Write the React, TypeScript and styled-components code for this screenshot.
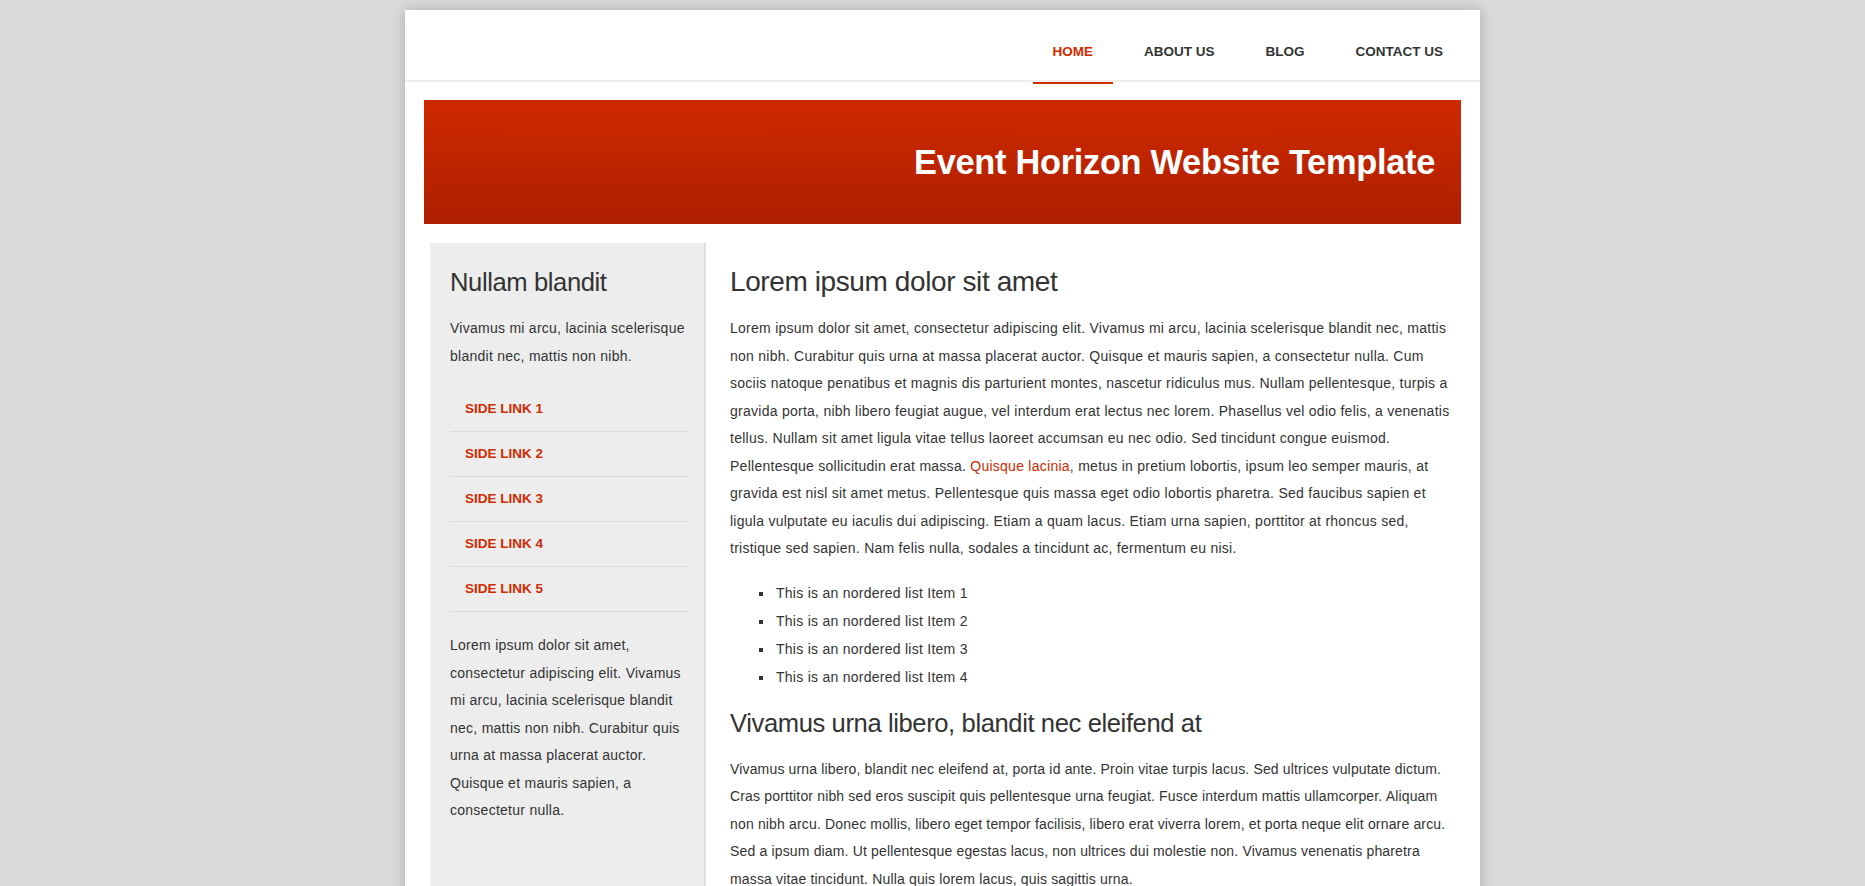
import React from "react";
import styled, { createGlobalStyle } from "styled-components";

const Global = createGlobalStyle`
  html, body { margin: 0; padding: 0; }
  body {
    background: #dadada;
    font-family: "Liberation Sans", Arial, sans-serif;
    color: #333;
  }
`;

const RED = "#d02a00";

const Page = styled.div`
  padding-top: 10px;
`;

const Container = styled.div`
  width: 1075px;
  margin-left: calc(50% - 527.5px);
  background: #fff;
  box-shadow: 0 0 12px rgba(0, 0, 0, 0.22);
  min-height: 900px;
`;

const Header = styled.header`
  height: 70px;
  border-bottom: 2px solid #eee;
  display: flex;
  justify-content: flex-end;
  padding-right: 17px;
`;

const NavList = styled.nav`
  display: flex;
  gap: 11px;
`;

const NavItem = styled.a<{ $active?: boolean }>`
  display: flex;
  align-items: center;
  padding: 11px 20px 0;
  height: 61px;
  margin-bottom: -2px;
  border-bottom: 2px solid ${(p) => (p.$active ? RED : "transparent")};
  font-size: 13.5px;
  font-weight: bold;
  color: ${(p) => (p.$active ? RED : "#333")};
  text-decoration: none;
  text-transform: uppercase;
`;

const Banner = styled.div`
  margin: 18px 19px 0;
  height: 124px;
  background: linear-gradient(to bottom, #cf2900, #ad1f00);
  display: flex;
  align-items: center;
  justify-content: flex-end;
  padding-right: 26px;
`;

const BannerTitle = styled.h1`
  margin: 0;
  color: #fff;
  font-size: 34.4px;
  font-weight: bold;
  letter-spacing: -0.3px;
`;

const Body = styled.div`
  display: grid;
  grid-template-columns: 276px 1fr;
  margin: 19px 19px 0 25px;
`;

const Sidebar = styled.aside`
  background: #ededed;
  border-right: 2px solid #ddd;
  padding: 23px 15px 40px 20px;
  min-height: 700px;
`;

const MainCol = styled.main`
  padding: 23px 0 0 24px;
`;

const Heading = styled.h2<{ $size?: number }>`
  margin: 0;
  font-size: ${(p) => p.$size ?? 28}px;
  font-weight: normal;
  color: #333;
  line-height: 32px;
  letter-spacing: -0.4px;
`;

const Text = styled.p<{ $track?: number }>`
  margin: 17px 0 0;
  font-size: 14px;
  line-height: 27.5px;
  letter-spacing: ${(p) => p.$track ?? 0.26}px;
  color: #333;
`;

const InlineLink = styled.a`
  color: ${RED};
  text-decoration: none;
`;

const SideLinks = styled.ul`
  list-style: none;
  margin: 17px 0 0;
  padding: 0;
`;

const SideLinkItem = styled.li`
  border-bottom: 1px solid #dcdcdc;
`;

const SideLink = styled.a`
  display: block;
  padding: 0 15px;
  height: 44px;
  line-height: 44px;
  font-size: 13.5px;
  font-weight: bold;
  color: ${RED};
  text-decoration: none;
`;

const SideText = styled(Text)`
  margin-top: 20px;
`;

const Bullets = styled.ul`
  margin: 16px 0 0;
  padding-left: 44px;
  list-style: square;
`;

const Bullet = styled.li`
  font-size: 14px;
  line-height: 28px;
  letter-spacing: 0.26px;
  color: #333;
  padding-left: 2px;
`;

const SecondHeading = styled(Heading)`
  margin-top: 16px;
`;

const navItems = ["Home", "About Us", "Blog", "Contact Us"];
const sideLinks = ["Side Link 1", "Side Link 2", "Side Link 3", "Side Link 4", "Side Link 5"];

export default function App() {
  return (
    <Page>
      <Global />
      <Container>
        <Header>
          <NavList>
            {navItems.map((n, i) => (
              <NavItem key={n} href="#" $active={i === 0}>
                {n}
              </NavItem>
            ))}
          </NavList>
        </Header>
        <Banner>
          <BannerTitle>Event Horizon Website Template</BannerTitle>
        </Banner>
        <Body>
          <Sidebar>
            <Heading $size={25.6}>Nullam blandit</Heading>
            <Text>Vivamus mi arcu, lacinia scelerisque blandit nec, mattis non nibh.</Text>
            <SideLinks>
              {sideLinks.map((s) => (
                <SideLinkItem key={s}>
                  <SideLink href="#">{s.toUpperCase()}</SideLink>
                </SideLinkItem>
              ))}
            </SideLinks>
            <SideText>
              Lorem ipsum dolor sit amet, consectetur adipiscing elit. Vivamus mi arcu, lacinia
              scelerisque blandit nec, mattis non nibh. Curabitur quis urna at massa placerat auctor.
              Quisque et mauris sapien, a consectetur nulla.
            </SideText>
          </Sidebar>
          <MainCol>
            <Heading>Lorem ipsum dolor sit amet</Heading>
            <Text>
              Lorem ipsum dolor sit amet, consectetur adipiscing elit. Vivamus mi arcu, lacinia
              scelerisque blandit nec, mattis non nibh. Curabitur quis urna at massa placerat auctor.
              Quisque et mauris sapien, a consectetur nulla. Cum sociis natoque penatibus et magnis
              dis parturient montes, nascetur ridiculus mus. Nullam pellentesque, turpis a gravida
              porta, nibh libero feugiat augue, vel interdum erat lectus nec lorem. Phasellus vel odio
              felis, a venenatis tellus. Nullam sit amet ligula vitae tellus laoreet accumsan eu nec
              odio. Sed tincidunt congue euismod. Pellentesque sollicitudin erat massa.{" "}
              <InlineLink href="#">Quisque lacinia</InlineLink>, metus in pretium lobortis, ipsum leo
              semper mauris, at gravida est nisl sit amet metus. Pellentesque quis massa eget odio
              lobortis pharetra. Sed faucibus sapien et ligula vulputate eu iaculis dui adipiscing.
              Etiam a quam lacus. Etiam urna sapien, porttitor at rhoncus sed, tristique sed sapien.
              Nam felis nulla, sodales a tincidunt ac, fermentum eu nisi.
            </Text>
            <Bullets>
              <Bullet>This is an nordered list Item 1</Bullet>
              <Bullet>This is an nordered list Item 2</Bullet>
              <Bullet>This is an nordered list Item 3</Bullet>
              <Bullet>This is an nordered list Item 4</Bullet>
            </Bullets>
            <SecondHeading $size={25.6}>Vivamus urna libero, blandit nec eleifend at</SecondHeading>
            <Text $track={0.16}>
              Vivamus urna libero, blandit nec eleifend at, porta id ante. Proin vitae turpis lacus.
              Sed ultrices vulputate dictum. Cras porttitor nibh sed eros suscipit quis pellentesque
              urna feugiat. Fusce interdum mattis ullamcorper. Aliquam non nibh arcu. Donec mollis,
              libero eget tempor facilisis, libero erat viverra lorem, et porta neque elit ornare
              arcu. Sed a ipsum diam. Ut pellentesque egestas lacus, non ultrices dui molestie non.
              Vivamus venenatis pharetra massa vitae tincidunt. Nulla quis lorem lacus, quis sagittis
              urna.
            </Text>
          </MainCol>
        </Body>
      </Container>
    </Page>
  );
}
